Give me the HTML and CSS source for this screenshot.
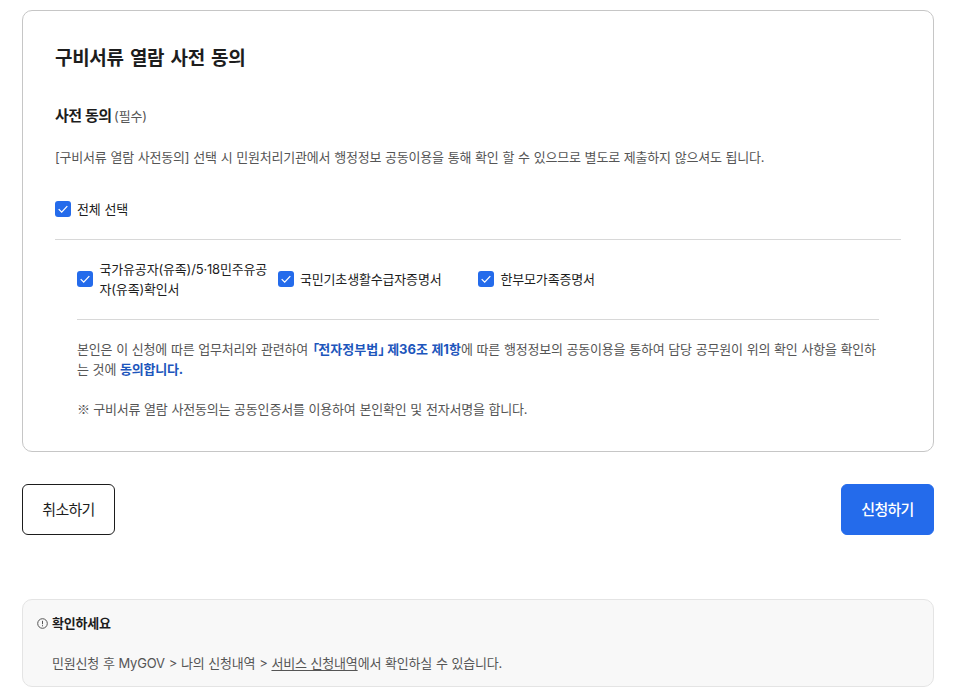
FILE: index.html
```html
<!DOCTYPE html>
<html lang="ko">
<head>
    <meta charset="UTF-8">
    <meta name="viewport" content="width=device-width, initial-scale=1.0">
    <title>구비서류 열람 사전 동의</title>
    <link rel="stylesheet" href="styles.css">
</head>
<body>

    <div class="container">
        <!-- Consent box -->
        <section class="consent-box">
            <h2 class="box-title">구비서류 열람 사전 동의</h2>
            <h3 class="sub-title">사전 동의 <span class="required">(필수)</span></h3>
            <p class="guide">[구비서류 열람 사전동의] 선택 시 민원처리기관에서 행정정보 공동이용을 통해 확인 할 수 있으므로 별도로 제출하지 않으셔도 됩니다.</p>

            <label class="check check-all">
                <input type="checkbox" checked>
                <span class="check-icon"><svg viewBox="0 0 16 16"><path d="M3.7 8.1l3 3 5.6-6"/></svg></span>
                <span class="check-text">전체 선택</span>
            </label>

            <div class="consent-detail">
                <div class="check-list">
                    <label class="check">
                        <input type="checkbox" checked>
                        <span class="check-icon"><svg viewBox="0 0 16 16"><path d="M3.7 8.1l3 3 5.6-6"/></svg></span>
                        <span class="check-text">국가유공자(유족)/5·18민주유공<br>자(유족)확인서</span>
                    </label>
                    <label class="check">
                        <input type="checkbox" checked>
                        <span class="check-icon"><svg viewBox="0 0 16 16"><path d="M3.7 8.1l3 3 5.6-6"/></svg></span>
                        <span class="check-text">국민기초생활수급자증명서</span>
                    </label>
                    <label class="check">
                        <input type="checkbox" checked>
                        <span class="check-icon"><svg viewBox="0 0 16 16"><path d="M3.7 8.1l3 3 5.6-6"/></svg></span>
                        <span class="check-text">한부모가족증명서</span>
                    </label>
                </div>
                <p class="agree-text">본인은 이 신청에 따른 업무처리와 관련하여 <strong class="law"><span class="bracket">「</span>전자정부법<span class="bracket">」</span> 제36조 제1항</strong>에 따른 행정정보의 공동이용을 통하여 담당 공무원이 위의 확인 사항을 확인하<br>는 것에 <strong>동의합니다.</strong></p>
                <p class="agree-note"><span class="mark">※</span> 구비서류 열람 사전동의는 공동인증서를 이용하여 본인확인 및 전자서명을 합니다.</p>
            </div>
        </section>

        <!-- Buttons -->
        <div class="btn-area">
            <button type="button" class="btn btn-cancel">취소하기</button>
            <button type="button" class="btn btn-submit">신청하기</button>
        </div>

        <!-- Notice -->
        <section class="notice">
            <h3 class="notice-title">
                <svg class="notice-icon" viewBox="0 0 11 11"><circle cx="5.5" cy="5.5" r="4.8"/><path d="M5.5 2.8v3.4M5.5 7.2v1.1"/></svg>
                <span>확인하세요</span>
            </h3>
            <p class="notice-text">민원신청 후 MyGOV &gt; 나의 신청내역 &gt; <a href="#" class="notice-link">서비스 신청내역</a>에서 확인하실 수 있습니다.</p>
        </section>
    </div>

</body>
</html>
```

FILE: styles.css
```css
* {
    box-sizing: border-box;
}

body {
    margin: 0;
    font-family: Inter, "Noto Sans CJK KR", sans-serif;
    font-size: 13px;
    line-height: 20px;
    letter-spacing: -0.2px;
    word-spacing: 0.4px;
    color: #1d1d1d;
    background-color: #fff;
}

h2, h3, p {
    margin: 0;
}

.container {
    width: 912px;
    margin: 10px 0 0 22px;
}

.consent-box {
    height: 442px;
    padding: 32px;
    border: 1px solid #c6c6c6;
    border-radius: 10px;
}

.box-title {
    padding-top: 1px;
    font-size: 19px;
    line-height: 30px;
    letter-spacing: -0.3px;
    word-spacing: 2px;
}

.sub-title {
    margin-top: 30px;
    font-size: 15px;
    line-height: 24px;
    letter-spacing: -0.5px;
}

.required {
    margin-left: -1px;
    font-size: 13px;
    font-weight: 400;
    letter-spacing: -0.2px;
    color: #555;
}

.guide {
    margin-top: 19px;
    color: #555;
    white-space: nowrap;
}

.check {
    display: flex;
    align-items: center;
    cursor: pointer;
}

.check input {
    position: absolute;
    opacity: 0;
}

.check-icon {
    flex: none;
    width: 16px;
    height: 16px;
    margin-right: 6px;
    border-radius: 3px;
    background-color: #246beb;
}

.check-icon svg {
    display: block;
    fill: none;
    stroke: #fff;
    stroke-width: 1.3;
}

.check-text {
    white-space: nowrap;
}

.check-all {
    margin-top: 32px;
    padding-bottom: 20px;
    border-bottom: 1px solid #d8d8d8;
}

.consent-detail {
    padding: 0 22px;
}

.check-list {
    display: grid;
    grid-template-columns: repeat(4, 1fr);
    height: 80px;
    padding-bottom: 1px;
    border-bottom: 1px solid #d8d8d8;
}

.check-list .check-icon {
    margin-right: 6.5px;
}

.check-list .check-text {
    letter-spacing: -0.17px;
}

.agree-text {
    margin-top: 19px;
    color: #555;
    white-space: nowrap;
}

.agree-text strong {
    color: #1d56bc;
}

.agree-text .law {
    margin-left: 1px;
    letter-spacing: 0;
}

/* half-width corner brackets */
.bracket {
    font-family: "Noto Sans CJK KR", sans-serif;
    font-feature-settings: "halt";
    letter-spacing: -1px;
}

.agree-note {
    margin-top: 20px;
    color: #555;
}

.mark {
    font-family: "Noto Sans CJK KR", sans-serif;
    letter-spacing: -0.7px;
}

.btn-area {
    display: flex;
    justify-content: space-between;
    margin-top: 32px;
}

.btn {
    width: 93px;
    height: 51px;
    padding: 0 0 2px;
    border: 1px solid #1d1d1d;
    border-radius: 6px;
    font-family: inherit;
    font-size: 15px;
    letter-spacing: -0.7px;
    color: #1d1d1d;
    background-color: #fff;
    cursor: pointer;
}

.btn-submit {
    border-color: #246beb;
    font-weight: 500;
    color: #fff;
    background-color: #246beb;
}

.notice {
    height: 88px;
    margin-top: 64px;
    padding: 13px 14px;
    border: 1px solid #e4e4e4;
    border-radius: 10px;
    background-color: #f8f8f8;
}

.notice-title {
    display: flex;
    align-items: center;
    font-size: 13px;
}

.notice-icon {
    width: 11px;
    height: 11px;
    margin-right: 4px;
    fill: none;
    stroke: #555;
    stroke-width: 1;
}

.notice-text {
    margin: 20px 0 0 15px;
    color: #555;
}

.notice-link {
    color: inherit;
    text-underline-offset: 2px;
}
```
